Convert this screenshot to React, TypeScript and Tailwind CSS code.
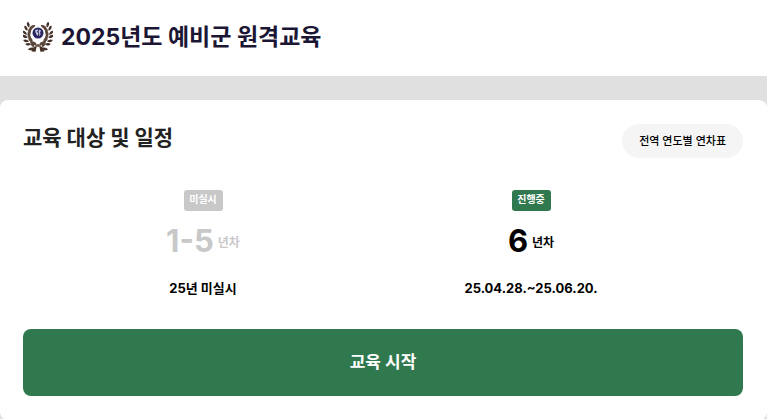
import clsx from 'clsx';

const LEAVES = [
  { x: 12, y: 24, a: -88 },
  { x: 9, y: 25, a: -66 },
  { x: 7, y: 21, a: -46 },
  { x: 5, y: 18, a: -34 },
  { x: 4, y: 14, a: -20 },
  { x: 4, y: 11, a: -4 },
  { x: 5, y: 7, a: 14 },
  { x: 7, y: 4, a: 30 },
];

const SCHEDULES = [
  { status: '미실시', active: false, years: '1-5', period: '25년 미실시' },
  { status: '진행중', active: true, years: '6', period: '25.04.28.~25.06.20.' },
];

function Branch() {
  return (
    <g>
      {LEAVES.map((leaf) => (
        <g key={leaf.y} transform={`translate(${leaf.x} ${leaf.y}) rotate(${leaf.a})`}>
          <path d="M0 1.8C-3.4 1.4-4.6-0.8-4-2.6C-1.8-2.4-0.2-0.6 0 1.8Z" fill="#45322a" />
          <path d="M0.4 1.8C0.4-0.8 1.6-2.8 4.2-3.4C4.8-0.8 3.4 1.4 0.4 1.8Z" fill="#5c463a" />
        </g>
      ))}
      <path d="M8 26.6L13.4 25.6L12.6 29.8L8.8 29.6Z" fill="#453228" />
    </g>
  );
}

function Emblem() {
  return (
    <svg viewBox="0 0 30 30" className="size-[30px] shrink-0" aria-hidden="true">
      <Branch />
      <g transform="translate(30 0) scale(-1 1)">
        <Branch />
      </g>
      <path d="M12.4 23.4L15 21.8L17.6 23.4L15 25.2Z" fill="#705846" />
      <circle cx="15" cy="11" r="5.5" fill="#27245f" />
      <path
        d="M12 8.4L14.4 7.2L15.2 8.2L13.8 9.8L15.4 11.2L14.9 14L13.4 12.4L12.6 10.4ZM16.2 7.6L18.2 8.8L17 10.2L17.6 12.2L16.3 14.6L16.2 11.4L15.5 9.8Z"
        fill="#c9c8dc"
      />
    </svg>
  );
}

export default function App() {
  return (
    <div className="min-h-screen bg-[#e0e0e0] font-['Inter','Noto_Sans_CJK_KR',sans-serif] text-black">
      <header className="flex h-[76px] items-center gap-2 bg-white pr-6 pb-[2px] pl-[23px]">
        <Emblem />
        <h1 className="text-[23px] leading-8 font-bold text-[#1c1635]">2025년도 예비군 원격교육</h1>
      </header>

      <main className="pt-6">
        <section className="rounded-lg bg-white pt-6 pr-6 pb-6 pl-[23px]">
          <div className="flex h-[34px] items-start justify-between">
            <h2 className="text-[21px] leading-7 font-bold text-[#222]">교육 대상 및 일정</h2>
            <button type="button" className="h-[34px] rounded-full bg-[#f5f5f5] px-[17px] text-[11px] font-medium">
              전역 연도별 연차표
            </button>
          </div>

          <ul className="mt-8 grid grid-cols-2 pr-12 pl-4">
            {SCHEDULES.map((item) => (
              <li key={item.status} className="flex flex-col items-center">
                <span
                  className={clsx(
                    'h-[21px] w-[39px] rounded-[3px] text-center text-[10px] leading-[18px] font-bold text-white',
                    item.active ? 'bg-[#30794e]' : 'bg-[#c8c8c8]'
                  )}
                >
                  {item.status}
                </span>
                <p className={clsx('mt-3 flex items-center gap-1 font-bold', !item.active && 'text-[#c8c8c8]')}>
                  <span className="text-[31px] leading-9">{item.years}</span>
                  <span className="pt-1 text-[12px] leading-4">년차</span>
                </p>
                <p className="mt-[19px] text-[13px] leading-5 font-bold">{item.period}</p>
              </li>
            ))}
          </ul>

          <button
            type="button"
            className="mt-[31px] h-[67px] w-full rounded-lg bg-[#30794e] text-[17px] font-bold text-white"
          >
            교육 시작
          </button>
        </section>
      </main>
    </div>
  );
}
